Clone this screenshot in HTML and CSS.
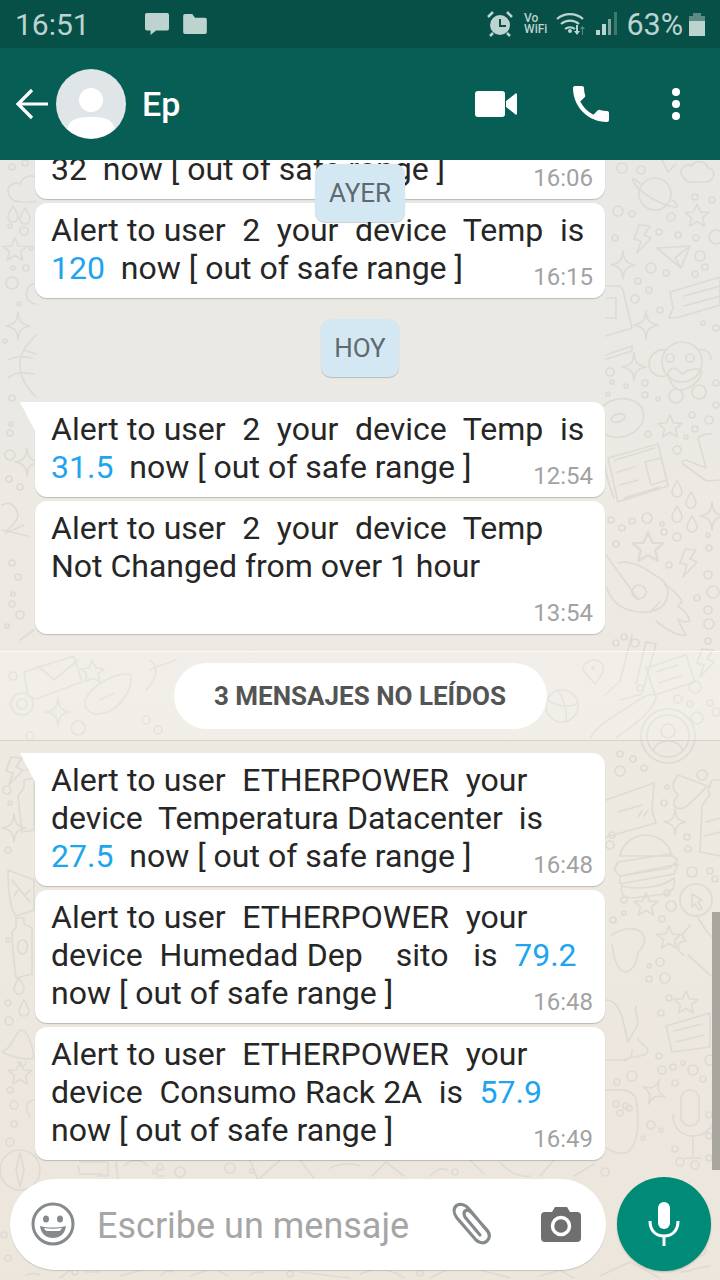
FILE: index.html
```html
<!DOCTYPE html>
<html>

<head>
    <title>Ep</title>
    <link rel="stylesheet" href="styles.css">
</head>

<body>
    <div class="status">
        <span class="clock">16:51</span>
        <svg class="ico-msg" width="26" height="24" viewBox="0 0 28 26"><path d="M3 1h22a2 2 0 0 1 2 2v15a2 2 0 0 1-2 2H13l-6 5v-5H3a2 2 0 0 1-2-2V3a2 2 0 0 1 2-2z" fill="#bcd3cf"/></svg>
        <svg class="ico-folder" width="24" height="20" viewBox="0 0 26 22"><path d="M2 0h8l3 4h11a2 2 0 0 1 2 2v14a2 2 0 0 1-2 2H2a2 2 0 0 1-2-2V2a2 2 0 0 1 2-2z" fill="#bcd3cf"/></svg>
        <div class="status-right">
            <svg class="ico-alarm" width="26" height="26" viewBox="0 0 26 26"><circle cx="13" cy="14" r="10" fill="#bcd3cf"/><path d="M13 8v7h6" fill="none" stroke="#075048" stroke-width="2"/><path d="M1 6l5-5M25 6l-5-5M3 25l3-3M23 25l-3-3" stroke="#bcd3cf" stroke-width="2.5"/></svg>
            <span class="vowifi">Vo<br>WiFi</span>
            <svg width="30" height="26" viewBox="0 0 30 26"><path d="M1 8a20 20 0 0 1 26 0M5 13a14 14 0 0 1 18 0M9 18a8 8 0 0 1 10 0" fill="none" stroke="#bcd3cf" stroke-width="2.2"/><circle cx="14" cy="20" r="2" fill="#bcd3cf"/><path d="M20 14h2v6h2l-3 4-3-4h2z" fill="#bcd3cf"/><path d="M26 24v-6h-2l2.500-3 2.500 3h-2v6z" fill="#5d8a83"/></svg>
            <svg class="signal" width="22" height="24" viewBox="0 0 22 24"><path d="M0 18h4v5H0z" fill="#bcd3cf"/><path d="M6 12h4v11H6z" fill="#bcd3cf"/><path d="M12 7h3v16h-3z" fill="#7fa5a0"/><path d="M18 0h3v23h-3z" fill="#3f7a71"/></svg>
            <span class="batt-pct">63%</span>
            <div class="batt"><div class="batt-cap"></div><div class="batt-body"></div></div>
        </div>
    </div>

    <div class="head">
        <svg class="back" width="34" height="34" viewBox="0 0 34 34"><path d="M33 17H3M17 3L3 17l14 14" fill="none" stroke="#fff" stroke-width="3.200"/></svg>
        <div class="avatar">
            <svg width="70" height="70" viewBox="0 0 70 70"><circle cx="35" cy="35" r="35" fill="#e0e5e8"/><circle cx="35" cy="31" r="12" fill="#fff"/><path d="M11 60c3-11 13-12 24-12s21 1 24 12a35 35 0 0 1-48 0z" fill="#fff"/></svg>
        </div>
        <span class="name">Ep</span>
        <div class="head-icons">
            <svg width="42" height="26" viewBox="0 0 42 26"><rect x="0" y="0" width="30" height="26" rx="3" fill="#fff"/><path d="M31 10l9-7a1 1 0 0 1 2 1v18a1 1 0 0 1-2 1l-9-7z" fill="#fff"/></svg>
            <svg width="48" height="48" viewBox="0 0 24 24"><path d="M6.620 10.790c1.440 2.830 3.760 5.140 6.590 6.590l2.200-2.200c.27-.27.67-.36 1.020-.24 1.120.37 2.330.57 3.570.57.550 0 1 .45 1 1V20c0 .55-.45 1-1 1-9.390 0-17-7.610-17-17 0-.55.45-1 1-1h3.500c.55 0 1 .45 1 1 0 1.250.2 2.450.57 3.570.11.350.03.740-.25 1.020l-2.200 2.200z" fill="#fff"/></svg>
            <svg class="dots" width="10" height="34" viewBox="0 0 10 34"><circle cx="5" cy="5" r="4" fill="#fff"/><circle cx="5" cy="17" r="4" fill="#fff"/><circle cx="5" cy="29" r="4" fill="#fff"/></svg>
        </div>
    </div>

    <div class="chat">
        <svg class="doodles" width="720" height="1120" viewBox="0 160 720 1120" fill="none" stroke="#dedbd5" stroke-width="1.700" stroke-linejoin="round" stroke-linecap="round">
            <defs>
                <path id="star" d="M0-12L3.500-4 12-3.700 5.500 1.800 7.500 10 0 5.500-7.500 10-5.500 1.800-12-3.700-3.500-4z"/>
                <path id="spark" d="M0-14C1-4 3-2 12 0 3 2 1 4 0 14-1 4-3 2-12 0-3-2-1-4 0-14z"/>
                <path id="bolt" d="M-3-13L8-12 2-3 9 0-5 15-1 3-8 1z"/>
                <path id="drop" d="M0-8C3-3 5 0 5 3A5 5 0 0 1-5 3C-5 0-3-3 0-8z"/>
            </defs>

            <!-- right margin, upper tile -->
            <circle cx="622" cy="168" r="5"/><circle cx="641" cy="170" r="4"/>
            <path d="M662 160l6 12 8-8M684 178c-8-8 2-16 8-12 2-6 14-6 16 2 8 0 8 12-2 14h-16c-3 0-5-2-6-4z"/>
            <circle cx="655" cy="194" r="16"/><path d="M640 183c-8-6-8-5-6 0 6 10 30 24 42 24 2 0 2-3-4-7"/>
            <circle cx="618" cy="211" r="5"/><circle cx="632" cy="214" r="3"/><circle cx="671" cy="217" r="4"/><circle cx="695" cy="197" r="3"/><circle cx="712" cy="200" r="3"/>
            <use href="#star" x="697" y="216"/><circle cx="615" cy="238" r="3"/><circle cx="659" cy="232" r="3"/><circle cx="678" cy="235" r="3"/><circle cx="696" cy="238" r="3"/><circle cx="716" cy="237" r="7"/>
            <use href="#bolt" x="642" y="238"/>
            <path d="M657 248l33-2-9 22zM675 258l6 10M675 258l15-12"/><circle cx="700" cy="256" r="5"/><circle cx="705" cy="267" r="3"/><circle cx="695" cy="274" r="3"/><circle cx="651" cy="268" r="5"/><circle cx="666" cy="273" r="3"/>
            <use href="#spark" x="623" y="265"/>
            <circle cx="638" cy="281" r="3"/><circle cx="649" cy="290" r="3"/><circle cx="635" cy="299" r="4"/><circle cx="660" cy="310" r="3"/>
            <path d="M670 292l50-15v28l-44 13h-7l4-10zM684 296l36-10M684 306l36-10"/>
            <path d="M606 286h14l3 4 9 38-26 8M606 298h10v20h-10M606 355l26-9v5l-26 8"/>
            <circle cx="703" cy="323" r="2"/><circle cx="716" cy="328" r="3"/><use href="#spark" x="646" y="325"/>
            <circle cx="682" cy="362" r="20"/><path d="M665 350c-8-2-16 6-16 14s8 14 16 12M699 350c8-2 12 4 12 10M668 372c6-8 10-2 14 2 5-4 16-8 20-2-2 10-14 18-22 18-8-2-12-12-12-18z"/><circle cx="670" cy="358" r="4"/><circle cx="690" cy="358" r="4"/><circle cx="676" cy="396" r="7"/><circle cx="699" cy="392" r="7"/>
            <use href="#spark" x="634" y="367"/><circle cx="610" cy="372" r="4"/><circle cx="612" cy="382" r="2"/><circle cx="626" cy="386" r="2"/><circle cx="645" cy="383" r="3"/><circle cx="645" cy="395" r="3"/><circle cx="608" cy="394" r="2"/><circle cx="716" cy="383" r="3"/><circle cx="716" cy="405" r="3"/><circle cx="658" cy="399" r="2"/>
            <ellipse cx="620" cy="418" rx="24" ry="19" transform="rotate(-15 620 418)"/><ellipse cx="618" cy="418" rx="7" ry="4" transform="rotate(-15 618 418)"/>
            <circle cx="692" cy="415" r="3"/><circle cx="709" cy="420" r="4"/><circle cx="695" cy="429" r="3"/><circle cx="686" cy="437" r="2"/><use href="#star" x="670" y="427"/><circle cx="648" cy="434" r="3"/><circle cx="677" cy="450" r="4"/>
            <path d="M712 434c-6-1-12 2-14 4l8 30-20-8c-3 0-5 2-3 4l22 16c4 2 8 0 15 0"/>
            <path d="M608 458l50-14 10 42-50 16zM604 462c2 12 6 26 10 36M615 460l40-12M617 472l18-5M620 485l18-5M624 498l36-11M645 462l16-4 6 22-16 5z"/>
            <use href="#drop" x="677" y="489"/><use href="#drop" x="691" y="500"/><use href="#drop" x="677" y="514" /><use href="#drop" x="692" y="524"/>
            <use href="#spark" x="712" y="516"/><circle cx="611" cy="520" r="3"/><circle cx="622" cy="528" r="3"/><circle cx="632" cy="521" r="3"/><circle cx="647" cy="518" r="5"/><circle cx="662" cy="524" r="2"/><circle cx="664" cy="532" r="3"/><circle cx="677" cy="537" r="4"/><circle cx="708" cy="535" r="2"/><circle cx="709" cy="548" r="3"/>
            <use href="#star" transform="translate(648 548) scale(1.300)"/><circle cx="616" cy="544" r="3"/><circle cx="669" cy="565" r="3"/><use href="#bolt" x="688" y="562"/>
            <path d="M606 555l32 44M618 563c16-4 30 8 40 14 10 6 12 14 8 24-6 12-24 14-40 8-8-3-14-8-20-22M664 585c8 2 14 10 18 16-2 2-2 2-4 6 6 2 10 8 12 14-6 2-8 0-12-2 2 6 4 10 8 16-8 2-20-6-30-14"/><circle cx="639" cy="592" r="7"/><path d="M650 612l10-10"/>
            <circle cx="708" cy="575" r="4"/><circle cx="713" cy="592" r="6"/><circle cx="697" cy="598" r="3"/><circle cx="708" cy="610" r="4"/><circle cx="709" cy="624" r="5"/><circle cx="708" cy="641" r="3"/><circle cx="616" cy="643" r="3"/><circle cx="624" cy="637" r="3"/><circle cx="635" cy="643" r="4"/>

            <!-- band at the unread label -->
            <path d="M605 695l15-14 12-46M620 700l22-6 14-50-10-2-10 42"/><circle cx="640" cy="688" r="3"/>
            <path d="M646 668l40-13 9 27-40 13zM656 672l22-7M659 683l22-7"/><circle cx="678" cy="699" r="4"/><circle cx="690" cy="704" r="3"/><circle cx="710" cy="703" r="3"/><circle cx="697" cy="718" r="6"/><circle cx="716" cy="712" r="4"/>
            <use href="#bolt" x="705" y="662"/><circle cx="695" cy="687" r="6"/>
            <circle cx="562" cy="706" r="16"/><path d="M547 700c10 6 20 8 30 4M558 690c6 10 10 20 8 32"/><path d="M590 738c6-10 14-16 24-22l28-18c8-5 14-4 14-1 0 6-10 18-20 26l-20 15"/>
            <circle cx="593" cy="668" r="1"/><path d="M583 670c0-8 8-10 12-10s10 4 8 12l-8 12z"/>
            <circle cx="668" cy="736" r="27"/><circle cx="668" cy="736" r="21"/><circle cx="668" cy="731" r="7"/><path d="M654 750c2-12 26-12 28 0"/>
            <path d="M24 672l50-16 8 26-46 17-8-3zM38 666l16 14 24-20M92 660l4 8 8 1-6 5 2 8-7-4-8 4 2-8-6-5 8-1z"/>
            <circle cx="22" cy="704" r="11"/><circle cx="22" cy="704" r="5"/><use href="#spark" x="58" y="712"/>
            <path d="M85 700c6-14 30-28 45-26 4 12-6 30-22 38-12 4-24 2-23-12zM100 700l14-7M150 660c10 6 6 20-4 30M150 670c10-6 18-6 26-10"/><circle cx="30" cy="736" r="4"/><circle cx="78" cy="728" r="7"/>
            <circle cx="13" cy="676" r="4"/><circle cx="146" cy="720" r="4"/><circle cx="158" cy="730" r="4"/>

            <!-- right margin, lower tile -->
            <circle cx="620" cy="754" r="3"/><circle cx="633" cy="759" r="3"/><circle cx="644" cy="768" r="3"/><circle cx="620" cy="771" r="5"/><circle cx="702" cy="775" r="5"/>
            <path d="M606 800l48-17-2 28 4 12-50 14M618 812l24-7M638 817l4-6M644 816l4-6"/>
            <path d="M678 775c-4 6-8 10-2 18 6 2-4 6-2 10 0 6 8 8 14 2 6-6 14-12 18-18M678 775l32 12"/>
            <circle cx="667" cy="787" r="2"/><circle cx="664" cy="803" r="3"/><use href="#spark" transform="translate(675 822) scale(.9)"/>
            <path d="M720 780h-8l-4 10 2 4-8 12-2 46 20 4M706 822l14-4M704 836l16-4"/>
            <circle cx="612" cy="835" r="3"/><circle cx="610" cy="845" r="4"/><circle cx="687" cy="837" r="3"/><circle cx="688" cy="849" r="3"/>
            <path d="M620 856c2-14 18-24 32-20 10 2 18 10 20 20zM618 862l52-8 8 6-8 8-50 8-6-6zM620 876l58-12-4 10-54 10zM622 886c14 4 40 2 52-8 2 8-2 14-8 16l-34 4c-8 0-12-4-10-12z"/>
            <circle cx="692" cy="872" r="5"/><circle cx="710" cy="871" r="3"/><circle cx="715" cy="879" r="3"/>
            <circle cx="696" cy="900" r="16"/><path d="M692 894l10 6-4 2 4 6-3 2-4-6-3 3z"/>
            <circle cx="624" cy="900" r="3"/><circle cx="624" cy="913" r="2"/><use href="#star" x="646" y="905"/><circle cx="667" cy="893" r="3"/><circle cx="671" cy="906" r="5"/><circle cx="613" cy="920" r="3"/><circle cx="662" cy="919" r="3"/>
            <use href="#star" x="669" y="938"/><circle cx="660" cy="962" r="4"/>
            <path d="M612 935c12-8 24-8 30-2 6 8 0 14-4 20-2 14-10 24-18 16-8-10-6-18-8-24M690 925c-4 8-12 8-4 16-10 0-10 10-2 14M696 915l12 18c4 4 10 8 12 14M688 955l22 20c4 2 6 2 10 0"/>
            <circle cx="649" cy="966" r="2"/><circle cx="649" cy="979" r="3"/><circle cx="665" cy="978" r="5"/><circle cx="669" cy="998" r="3"/><circle cx="661" cy="1013" r="3"/>
            <use href="#star" x="686" y="1003"/>
            <path d="M606 1000c8 0 12 6 16 16l6 26 10-18c0-8-4-14-2-18M606 1060l18 0c4-4 20-2 24-8 0-8-10-8-10-14M632 1050c0 8-6 12-10 10"/>
            <path d="M666 1026l44-13 0 34-38 5zM674 1031l28-7M676 1042l28-7"/><circle cx="659" cy="1056" r="3"/><circle cx="662" cy="1070" r="4"/><circle cx="673" cy="1067" r="3"/><circle cx="683" cy="1063" r="2"/><circle cx="693" cy="1070" r="5"/><circle cx="710" cy="1060" r="5"/><circle cx="675" cy="1083" r="3"/><circle cx="703" cy="1079" r="3"/>
            <circle cx="617" cy="1082" r="3"/><circle cx="632" cy="1076" r="5"/>
            <path d="M606 1090c12 0 24-2 30 8 4 24 2 46-8 54-8 4-18-2-22-4"/><circle cx="616" cy="1104" r="3"/><circle cx="626" cy="1106" r="3"/><circle cx="620" cy="1113" r="3"/><circle cx="629" cy="1108" r="3"/>
            <use href="#spark" transform="translate(654 1092) rotate(25)"/>
            <rect x="681" y="1090" width="18" height="36" rx="9"/><path d="M673 1115c0 28 40 28 42 0M693 1138v20M685 1158h16"/>
            <circle cx="651" cy="1125" r="4"/><circle cx="661" cy="1130" r="2"/><circle cx="643" cy="1138" r="2"/><circle cx="675" cy="1149" r="3"/><circle cx="680" cy="1162" r="4"/><circle cx="695" cy="1165" r="4"/><circle cx="709" cy="1158" r="3"/><circle cx="709" cy="1136" r="3"/><circle cx="709" cy="1115" r="3"/>

            <!-- left margin -->
            <circle cx="12" cy="167" r="3"/><circle cx="25" cy="163" r="3"/>
            <path d="M8 190c0-6 8-8 12-6 2-8 14-10 16-6M8 190c0 8 6 12 14 12h14"/>
            <use href="#drop" x="13" y="214" /><use href="#drop" x="25" y="216"/><circle cx="10" cy="226" r="2"/><circle cx="24" cy="231" r="4"/>
            <use href="#star" x="15" y="250"/><circle cx="31" cy="248" r="2"/><circle cx="13" cy="268" r="2"/><circle cx="26" cy="268" r="3"/><circle cx="12" cy="283" r="6"/><circle cx="19" cy="304" r="2"/><path d="M36 284c-8 0-12 8-8 16 2 2 6 4 8 4"/>
            <use href="#spark" x="18" y="326"/><circle cx="5" cy="341" r="2"/><path d="M36 335c-10 10-16 18-16 30s6 22 16 32M24 350l12 4M8 360c8-4 14-4 24-2M8 378c8-6 14-6 26-4"/><circle cx="12" cy="398" r="3"/>
            <circle cx="11" cy="424" r="2"/><circle cx="10" cy="433" r="3"/><circle cx="10" cy="455" r="5"/><use href="#spark" x="27" y="462"/><circle cx="9" cy="479" r="3"/><circle cx="20" cy="487" r="3"/>
            <path d="M2 505c8-4 14 0 16 10 0 8-8 10-12 18l18-8M2 530l26 6"/><circle cx="12" cy="563" r="3"/><circle cx="18" cy="577" r="3"/><circle cx="13" cy="594" r="2"/><circle cx="12" cy="604" r="3"/><circle cx="20" cy="615" r="4"/><circle cx="7" cy="626" r="2"/><path d="M20 640l14-10"/>
            <use href="#bolt" x="14" y="770"/><path d="M24 780l10-2v52l-12 2-4-36 6-8zM26 770h8v8"/><circle cx="7" cy="790" r="4"/><circle cx="10" cy="803" r="2"/><use href="#spark" x="14" y="828"/><circle cx="8" cy="850" r="3"/><path d="M8 870l26 10v30l-18 6c-6-8-8-28-8-46zM12 880l18 22M18 890l-4 6M24 896l6-6"/>
            <circle cx="8" cy="940" r="2"/><path d="M16 918h8v6l8 4v46l-16 4c-2-16-4-36-4-46l4-4zM22 940a5 7 0 1 0 1 0"/>
            <use href="#drop" x="19" y="986"/><use href="#drop" x="24" y="1008"/><circle cx="8" cy="1003" r="3"/><circle cx="9" cy="1021" r="4"/><path d="M2 1052c10-4 12-16 18-22 8 0 12 14 14 28-8 2-20 0-32-6zM18 1062a4 4 0 0 0 8 0"/><use href="#star" x="20" y="1074"/><path d="M34 1100c-8 0-10 10-4 16"/><circle cx="10" cy="1090" r="3"/><circle cx="14" cy="1105" r="4"/><circle cx="14" cy="1124" r="3"/>

            <!-- row under the last bubble and at the foot -->
            <circle cx="20" cy="1170" r="20"/><path d="M20 1153l4 17-4 17-4-17z"/><circle cx="10" cy="1142" r="4"/>
            <path d="M78 1166l2 8h22M80 1162h28v14h-10M116 1162l2 18M124 1166a16 16 0 0 1 24 0M158 1176h6"/><circle cx="160" cy="1167" r="3"/><circle cx="180" cy="1172" r="5"/>
            <path d="M250 1160l8 20 22-20M300 1160l14 18M330 1168c8-4 20-6 30-2M372 1176l14-14 18 14M430 1176c8-8 12-8 18-6M470 1160l14 14M500 1162c8 10 20 16 30 14M540 1176l14-16M574 1176l20-12"/><circle cx="230" cy="1168" r="5"/><circle cx="155" cy="1172" r="2"/><circle cx="252" cy="1171" r="2"/><circle cx="455" cy="1172" r="3"/><circle cx="605" cy="1172" r="4"/>
            <circle cx="4" cy="1235" r="3"/>
            <path d="M26 1275c6-2 10-2 14 0M60 1278l10-8M86 1272h14M120 1276l30-8M160 1276c6-6 10-6 14-4M190 1276l24-8 14 8M250 1275c6-4 10-4 14-2M300 1272l50 6M360 1274c14-6 30-6 44 4M430 1278l16-8M480 1270l30 8M540 1276l20-6 14 8M600 1276l30-14 30 16M680 1272c10 0 20-6 30-6"/><circle cx="75" cy="1272" r="3"/><circle cx="290" cy="1274" r="3"/><circle cx="420" cy="1273" r="3"/><circle cx="700" cy="1250" r="6"/><circle cx="8" cy="1258" r="3"/>
        </svg>

        <div class="date-float">AYER</div>

        <div class="bubble first">
            <span class="ln">32  now [ out of safe range ]</span>
            <span class="time">16:06</span>
        </div>
        <div class="bubble">
            <span class="ln wide">Alert to user  2  your  device  Temp  is</span>
            <span class="ln"><a class="num">120</a>  now [ out of safe range ]</span>
            <span class="time">16:15</span>
        </div>

        <div class="date">HOY</div>

        <div class="bubble tail">
            <span class="ln wide">Alert to user  2  your  device  Temp  is</span>
            <span class="ln"><a class="num">31.5</a>  now [ out of safe range ]</span>
            <span class="time">12:54</span>
        </div>
        <div class="bubble">
            <span class="ln wide">Alert to user  2  your  device  Temp</span>
            <span class="ln">Not Changed from over 1 hour</span>
            <span class="ln"> </span>
            <span class="time">13:54</span>
        </div>

        <div class="unread"><span>3 MENSAJES NO LEÍDOS</span></div>

        <div class="bubble tail">
            <span class="ln wide">Alert to user  ETHERPOWER  your</span>
            <span class="ln">device  Temperatura Datacenter  is</span>
            <span class="ln"><a class="num">27.5</a>  now [ out of safe range ]</span>
            <span class="time">16:48</span>
        </div>
        <div class="bubble">
            <span class="ln wide">Alert to user  ETHERPOWER  your</span>
            <span class="ln wide">device  Humedad Dep    sito   is  <a class="num">79.2</a></span>
            <span class="ln">now [ out of safe range ]</span>
            <span class="time">16:48</span>
        </div>
        <div class="bubble">
            <span class="ln wide">Alert to user  ETHERPOWER  your</span>
            <span class="ln wide">device  Consumo Rack 2A  is  <a class="num">57.9</a></span>
            <span class="ln">now [ out of safe range ]</span>
            <span class="time">16:49</span>
        </div>

        <div class="scrollbar"></div>

        <div class="composer">
            <div class="input">
                <svg class="emoji" width="44" height="44" viewBox="0 0 44 44"><circle cx="22" cy="22" r="20" fill="none" stroke="#858a8d" stroke-width="3"/><ellipse cx="15" cy="17" rx="3" ry="3.500" fill="#858a8d"/><ellipse cx="29" cy="17" rx="3" ry="3.500" fill="#858a8d"/><path d="M9 24c8 2 18 2 26 0-1 8-6 12-13 12S10 32 9 24z" fill="#858a8d"/><path d="M13 26c6 1 12 1 18 0-1 2-2 3-3 3H16c-1 0-2-1-3-3z" fill="#fff"/></svg>
                <span class="placeholder">Escribe un mensaje</span>
                <svg class="clip" width="46" height="46" viewBox="0 0 46 46"><path d="M38 32L18 8c-4-5-10-6-13-3s-2 8 1 12l19 22c3 3 8 4 11 1s3-7 0-11L20 11c-2-2-4-3-6-1s-1 4 0 6l15 18" fill="none" stroke="#858a8d" stroke-width="3.200" stroke-linecap="round"/></svg>
                <svg class="cam" width="40" height="36" viewBox="0 0 40 36"><path d="M4 6h7l3-5h12l3 5h7a4 4 0 0 1 4 4v22a4 4 0 0 1-4 4H4a4 4 0 0 1-4-4V10a4 4 0 0 1 4-4z" fill="#6f6f6f"/><circle cx="20" cy="20" r="8.500" fill="none" stroke="#fff" stroke-width="3.500"/></svg>
            </div>
            <div class="mic">
                <svg width="34" height="44" viewBox="0 0 34 44"><rect x="11" y="0" width="12" height="27" rx="6" fill="#fff"/><path d="M3 19c0 10 6 15 14 15s14-5 14-15" fill="none" stroke="#fff" stroke-width="3"/><path d="M17 33v11" stroke="#fff" stroke-width="3"/></svg>
            </div>
        </div>
    </div>
</body>

</html>
```

FILE: styles.css
```css
html, body {
    margin: 0;
    padding: 0;
}

body {
    width: 720px;
    height: 1280px;
    overflow: hidden;
    font-family: Roboto, "Liberation Sans", sans-serif;
}

.status {
    height: 48px;
    background: #075048;
    display: flex;
    align-items: center;
    padding: 0 15px 0 15px;
    color: #bcd3cf;
    box-sizing: border-box;
}

.clock {
    font-size: 30px;
    margin-right: 54px;
}

.ico-msg {
    margin-right: 13px;
}

.status-right {
    margin-left: auto;
    display: flex;
    align-items: center;
    gap: 9px;
}

.ico-alarm {
    margin-right: 2px;
}

.vowifi {
    font-size: 12px;
    line-height: 11px;
    font-weight: 500;
}

.signal {
    margin-left: 1px;
}

.batt-pct {
    font-size: 30.500px;
    margin-left: -1px;
}

.batt {
    width: 16px;
    display: flex;
    flex-direction: column;
    align-items: center;
    margin-left: -3px;
}

.batt-cap {
    width: 8px;
    height: 3px;
    background: #5d8a83;
}

.batt-body {
    width: 16px;
    height: 20px;
    background: linear-gradient(#5d8a83 25%, #bcd3cf 25%);
}

.head {
    height: 112px;
    background: #075e54;
    display: flex;
    align-items: center;
    padding-left: 15px;
    box-sizing: border-box;
    position: relative;
    z-index: 3;
}

.back {
    margin-right: 7px;
}

.avatar {
    width: 70px;
    height: 70px;
}

.name {
    color: #fff;
    font-size: 34px;
    font-weight: 500;
    margin-left: 16px;
}

.head-icons {
    margin-left: auto;
    margin-right: 39px;
    display: flex;
    align-items: center;
    gap: 50px;
}

.dots {
    margin-left: 6px;
}

.chat {
    position: relative;
    height: 1120px;
    overflow: hidden;
    display: flex;
    flex-direction: column;
    background: linear-gradient(#e9e8e4 0%, #ebe9e4 24%, #eeeae3 32%, #ece6dd 100%);
}

.doodles {
    position: absolute;
    left: 0;
    top: 0;
}

.bubble {
    position: relative;
    width: 570px;
    margin: 4px 0 0 35px;
    padding: 8px 12px 11px 16px;
    box-sizing: border-box;
    background: #fff;
    border-radius: 12px;
    box-shadow: 0 1px 1px rgba(0, 0, 0, 0.2);
    display: flex;
    flex-direction: column;
    color: #262626;
    font-size: 32px;
    line-height: 38px;
}

.bubble.first {
    margin-top: -18px;
}

.bubble.tail {
    border-top-left-radius: 0;
}

.bubble.tail::before {
    content: "";
    position: absolute;
    left: -15px;
    top: 0;
    border-top: 29px solid #fff;
    border-left: 15px solid transparent;
}

.ln {
    display: block;
    white-space: pre;
    min-height: 38px;
}

.ln.wide {
    word-spacing: 0.35px;
}

.num {
    color: #1ea5ee;
}

.time {
    position: absolute;
    right: 12px;
    bottom: 6px;
    font-size: 24px;
    line-height: 30px;
    color: #a2a2a2;
}

.date, .date-float {
    background: #d4e8f3;
    color: #5e6a70;
    font-size: 26px;
    border-radius: 10px;
    box-shadow: 0 1px 1px rgba(0, 0, 0, 0.2);
    text-align: center;
    box-sizing: border-box;
    line-height: 58px;
    height: 58px;
}

.date {
    align-self: center;
    width: 78px;
    margin: 21px 0 21px;
    position: relative;
}

.date + .bubble {
    margin-top: 4px;
}

.date-float {
    position: absolute;
    left: 315px;
    top: 4px;
    width: 90px;
    z-index: 2;
}

.unread {
    position: relative;
    margin-top: 17px;
    height: 90px;
    background: rgba(255, 255, 255, 0.25);
    border-top: 1px solid #fbfaf8;
    border-bottom: 1px solid #d6d2cc;
    box-sizing: border-box;
    display: flex;
    align-items: center;
    justify-content: center;
    margin-bottom: 12px;
}

.unread span {
    background: #fff;
    width: 373px;
    height: 66px;
    border-radius: 33px;
    line-height: 66px;
    text-align: center;
    font-size: 26px;
    font-weight: 700;
    color: #545454;
}

.unread + .bubble {
    margin-top: 0;
}

.scrollbar {
    position: absolute;
    right: 0;
    top: 752px;
    width: 8px;
    height: 258px;
    background: #a8a49e;
}

.composer {
    position: absolute;
    left: 10px;
    top: 1017px;
    width: 701px;
    display: flex;
    align-items: center;
    justify-content: space-between;
}

.input {
    width: 596px;
    height: 91px;
    background: #fff;
    border-radius: 46px;
    box-shadow: 0 1px 1px rgba(0, 0, 0, 0.15);
    display: flex;
    align-items: center;
    box-sizing: border-box;
    padding-left: 21px;
}

.placeholder {
    font-size: 36px;
    color: #a6a6a6;
    margin: 3px 0 0 22px;
}

.clip {
    margin-left: 42px;
}

.cam {
    margin-left: 44px;
}

.mic {
    width: 94px;
    height: 94px;
    border-radius: 50%;
    background: #008a78;
    box-shadow: 0 1px 2px rgba(0, 0, 0, 0.2);
    display: flex;
    align-items: center;
    justify-content: center;
}
```
